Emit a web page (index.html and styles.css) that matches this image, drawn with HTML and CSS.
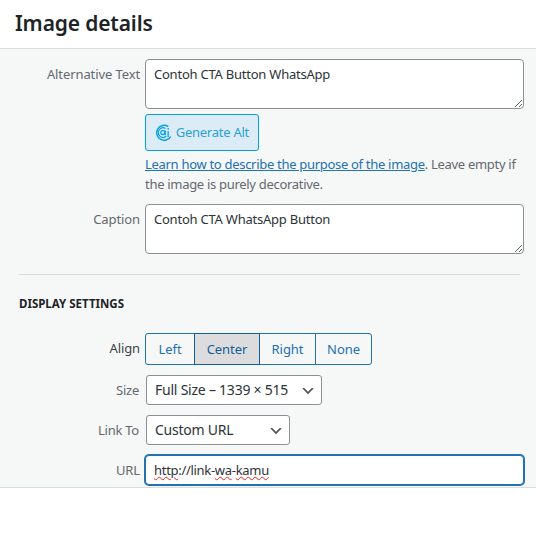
FILE: index.html
```html
<!DOCTYPE html>
<html lang="en">
    <head>
        <meta charset="utf-8">
        <title>Image details</title>
        <link rel="stylesheet" href="styles.css">
    </head>
    <body>
        <header class="modal-head">
            <h1>Image details</h1>
        </header>

        <main class="details">
            <div class="row">
                <label class="row-label" for="alt_text">Alternative Text</label>
                <div class="row-body">
                    <textarea id="alt_text" class="field-area" spellcheck="false">Contoh CTA Button WhatsApp</textarea>
                    <button class="generate-btn">
                        <svg class="generate-icon" width="17" height="17" viewBox="0 0 17 17" fill="none" stroke="#00a0e9">
                            <path d="M13.5 2.4A7.6 7.6 0 1 0 16 12.6" stroke-width="1.5"/>
                            <path d="M10.8 4.4A4.9 4.9 0 1 0 11.5 12.4" stroke-width="1.2"/>
                            <circle cx="8" cy="8.6" r="2.1" stroke-width="1.2"/>
                            <path d="M10.4 6.4V11.4M13.4 7V13" stroke-width="1.3"/>
                            <circle cx="13.4" cy="4.8" r="0.9" fill="#00a0e9" stroke="none"/>
                        </svg>
                        <span>Generate Alt</span>
                    </button>
                    <p class="help"><a href="#">Learn how to describe the purpose of the image</a>. Leave empty if the image is purely decorative.</p>
                </div>
            </div>

            <div class="row row-caption">
                <label class="row-label" for="caption">Caption</label>
                <div class="row-body">
                    <textarea id="caption" class="field-area" spellcheck="false">Contoh CTA WhatsApp Button</textarea>
                </div>
            </div>

            <hr>

            <h2>Display Settings</h2>

            <div class="row row-align">
                <span class="row-label label-dark">Align</span>
                <div class="btn-group">
                    <button>Left</button>
                    <button class="active">Center</button>
                    <button>Right</button>
                    <button>None</button>
                </div>
            </div>

            <div class="row row-select">
                <label class="row-label" for="size">Size</label>
                <select id="size" class="field-select size-select">
                    <option>Full Size – 1339 × 515</option>
                </select>
            </div>

            <div class="row row-select">
                <label class="row-label" for="link_to">Link To</label>
                <select id="link_to" class="field-select link-select">
                    <option>Custom URL</option>
                </select>
            </div>

            <div class="row row-url">
                <span class="row-label">URL</span>
                <div class="url-field"><span class="typo">http</span>://link-<span class="typo">wa</span>-<span class="typo">kamu</span></div>
            </div>
        </main>
    </body>
</html>
```

FILE: styles.css
```css
* {
    box-sizing: border-box;
}

body {
    margin: 0;
    background-color: #fff;
    font-family: "Noto Sans", "Open Sans", sans-serif;
    font-size: 13px;
    color: #3c434a;
}

.modal-head {
    height: 49px;
    padding: 0 15px;
    display: flex;
    align-items: center;
    border-bottom: 1px solid #dcdcde;
}

.modal-head h1 {
    margin: 0 0 3px;
    font-size: 21px;
    font-weight: 600;
    letter-spacing: -0.15px;
    color: #1d2327;
}

.details {
    height: 439px;
    padding: 10px 12px 0 0;
    background-color: #f6f7f7;
    border-bottom: 1px solid #dcdcde;
    overflow: hidden;
}

.row {
    display: grid;
    grid-template-columns: 140px 1fr;
    column-gap: 5px;
}

.row-label {
    text-align: right;
    color: #646970;
    line-height: 30px;
    letter-spacing: -0.1px;
}

.label-dark {
    color: #3c434a;
}

.row-body {
    min-width: 0;
}

.field-area {
    display: block;
    width: 100%;
    height: 50px;
    padding: 3px 8px;
    font: inherit;
    line-height: 22px;
    letter-spacing: -0.23px;
    color: #2c3338;
    background-color: #fff;
    border: 1px solid #8c8f94;
    border-radius: 4px;
}

.generate-btn {
    display: flex;
    align-items: center;
    gap: 4px;
    width: 114px;
    height: 37px;
    margin-top: 5px;
    padding: 0 9px 1px;
    font: inherit;
    letter-spacing: -0.25px;
    white-space: nowrap;
    color: #2a9fd6;
    background-color: #dcecf7;
    border: 1px solid #00a0e9;
    border-radius: 3px;
}

.help {
    margin: 3px 0 0;
    line-height: 20px;
    letter-spacing: -0.3px;
    color: #646970;
}

.help a {
    color: #2271b1;
}

.row-caption {
    margin-top: 10px;
}

hr {
    height: 1px;
    margin: 20px 4px 0 19px;
    border: 0;
    background-color: #dcdcde;
}

h2 {
    margin: 21px 0 0 19px;
    font-size: 11.5px;
    line-height: 16px;
    font-weight: 700;
    text-transform: uppercase;
    color: #1d2327;
}

.row-align {
    margin-top: 21px;
}

.btn-group {
    display: flex;
    width: 227px;
    height: 32px;
}

.btn-group button {
    height: 32px;
    margin-left: -1px;
    font: inherit;
    letter-spacing: -0.06px;
    color: #2271b1;
    background-color: #f6f7f7;
    border: 1px solid #2271b1;
}

.btn-group button:nth-child(1) {
    width: 50px;
    margin-left: 0;
    border-radius: 3px 0 0 3px;
}

.btn-group button:nth-child(2) {
    width: 66px;
}

.btn-group button:nth-child(3) {
    width: 57px;
}

.btn-group button:nth-child(4) {
    width: 57px;
    border-radius: 0 3px 3px 0;
}

.btn-group button.active {
    color: #135e96;
    background-color: #dcdcde;
    border-color: #135e96;
    position: relative;
}

.row-select {
    margin-top: 10px;
    grid-template-columns: 141px 1fr;
}

.row-select .row-label {
    padding-right: 2px;
    letter-spacing: -0.25px;
}

.field-select {
    display: block;
    height: 30px;
    padding: 0 24px 1px 8px;
    font: inherit;
    font-size: 14px;
    letter-spacing: -0.23px;
    color: #2c3338;
    background: #fff url("data:image/svg+xml,%3Csvg xmlns='http://www.w3.org/2000/svg' width='20' height='20'%3E%3Cpath d='M5 6l5 5 5-5 2 1-7 7-7-7z' fill='%23555'/%3E%3C/svg%3E") no-repeat right 5px top 55%;
    background-size: 16px 16px;
    border: 1px solid #8c8f94;
    border-radius: 3px;
    appearance: none;
}

.size-select {
    width: 176px;
}

.link-select {
    width: 144px;
}

.row-url {
    margin-top: 10px;
}

.url-field {
    height: 30px;
    padding: 0 8px;
    line-height: 28px;
    letter-spacing: -0.3px;
    color: #2c3338;
    background-color: #fff;
    border: 1px solid #2271b1;
    border-radius: 4px;
    box-shadow: 0 0 0 1px #2271b1;
}

.typo {
    text-decoration: underline wavy #e22;
    text-decoration-thickness: 1.3px;
}
```
